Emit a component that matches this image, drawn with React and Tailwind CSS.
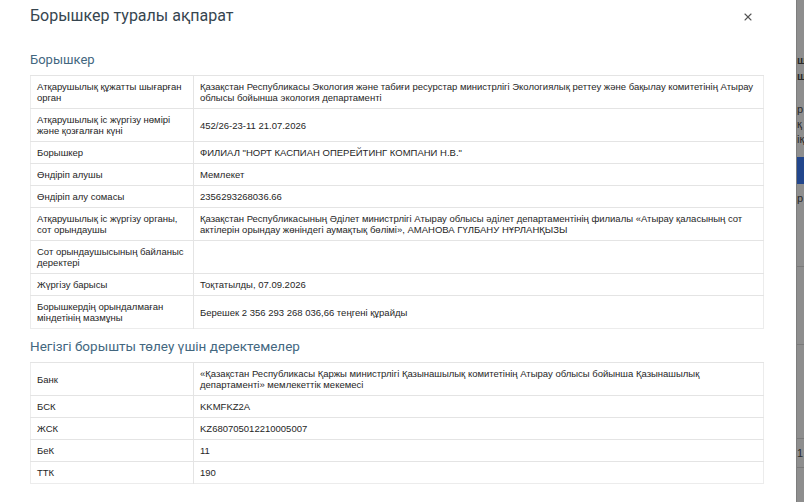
import { X } from "lucide-react";

const debtorRows = [
  {
    label: "Атқарушылық құжатты шығарған орган",
    value:
      "Қазақстан Республикасы Экология және табиғи ресурстар министрлігі Экологиялық реттеу және бақылау комитетінің Атырау облысы бойынша экология департаменті",
  },
  { label: "Атқарушылық іс жүргізу нөмірі және қозғалған күні", value: "452/26-23-11 21.07.2026" },
  { label: "Борышкер", value: 'ФИЛИАЛ "НОРТ КАСПИАН ОПЕРЕЙТИНГ КОМПАНИ Н.В."' },
  { label: "Өндіріп алушы", value: "Мемлекет" },
  { label: "Өндіріп алу сомасы", value: "2356293268036.66" },
  {
    label: "Атқарушылық іс жүргізу органы, сот орындаушы",
    value:
      "Қазақстан Республикасының Әділет министрлігі Атырау облысы әділет департаментінің филиалы «Атырау қаласының сот актілерін орындау жөніндегі аумақтық бөлімі», АМАНОВА ГҮЛБАНУ НҰРЛАНҚЫЗЫ",
  },
  { label: "Сот орындаушысының байланыс деректері", value: "" },
  { label: "Жүргізу барысы", value: "Тоқтатылды, 07.09.2026" },
  { label: "Борышкердің орындалмаған міндетінің мазмұны", value: "Берешек 2 356 293 268 036,66 теңгені құрайды" },
];

const paymentRows = [
  {
    label: "Банк",
    value:
      "«Қазақстан Республикасы Қаржы министрлігі Қазынашылық комитетінің Атырау облысы бойынша Қазынашылық департаменті» мемлекеттік мекемесі",
  },
  { label: "БСК", value: "KKMFKZ2A" },
  { label: "ЖСК", value: "KZ680705012210005007" },
  { label: "БеК", value: "11" },
  { label: "ТТК", value: "190" },
];

const InfoTable = ({ rows }) => (
  <table className="w-full border-collapse border border-[#ececec] text-[9.5px] leading-[11px] text-[#262626]">
    <tbody>
      {rows.map((row, i) => (
        <tr key={i} className="border-t border-[#e4e4e4]">
          <td className="w-[163px] border-r border-[#e4e4e4] px-[6px] py-[5px] align-middle">{row.label}</td>
          <td className="px-[6px] py-[5px] align-middle">{row.value}</td>
        </tr>
      ))}
    </tbody>
  </table>
);

export default function App() {
  return (
    <div className="flex h-[502px] w-[804px] overflow-hidden bg-white font-['Liberation_Sans',Arial,sans-serif]">
      <div className="w-[796px] shrink-0 pl-[30px] pr-[32px]">
        <div className="flex h-[31px] items-center justify-between">
          <h1 className="font-['Roboto',sans-serif] text-[16px] font-normal text-[#36454f]">
            Борышкер туралы ақпарат
          </h1>
          <button className="mr-[10px] mt-[2px] text-[#555]">
            <X size={12} strokeWidth={2.2} />
          </button>
        </div>

        <h2 className="mt-[21px] mb-[7px] h-[16px] font-['Roboto',sans-serif] text-[13px] leading-[16px] text-[#43677f]">
          Борышкер
        </h2>
        <InfoTable rows={debtorRows} />

        <h2 className="mt-[8px] mb-[7px] h-[18px] font-['Roboto',sans-serif] text-[13.5px] leading-[18px] text-[#43677f]">
          Негізгі борышты төлеу үшін деректемелер
        </h2>
        <InfoTable rows={paymentRows} />
      </div>

      {/* dimmed page behind the modal */}
      <div className="flex-1 overflow-hidden border-l border-[#7d7d7d] bg-[#8e8e8e] font-['Liberation_Sans',sans-serif] text-[11px] leading-[16px] text-[#2a2a2a]">
        <div className="mt-[52px] font-bold">ш</div>
        <div className="font-bold">ш</div>
        <div className="mt-[18px] leading-[15px]">р</div>
        <div className="leading-[15px]">қ</div>
        <div className="leading-[15px]">іқ</div>
        <div className="mt-[10px] h-[27px] bg-[#22468c]"></div>
        <div className="mt-[6px]">р</div>
        <div className="mt-[60px] border-t border-[#7a7a7a]"></div>
        <div className="mt-[77px] border-t border-[#7a7a7a]"></div>
        <div className="mt-[93px] border-t border-[#7a7a7a]"></div>
        <div className="mt-[6px]">1</div>
        <div className="mt-[6px] border-t border-[#7a7a7a]"></div>
      </div>
    </div>
  );
}
